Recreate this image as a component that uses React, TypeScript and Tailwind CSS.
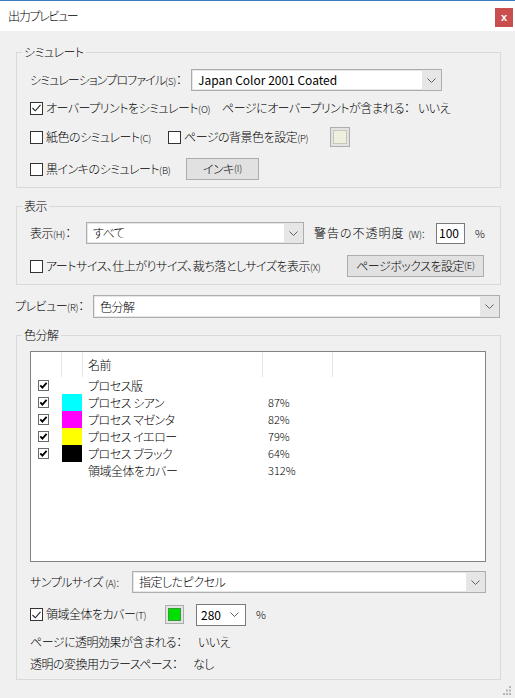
import React from "react";

const Chevron = () => (
  <svg width="9" height="5" viewBox="0 0 9 5">
    <path d="M0.5 0.5 L4.5 4.5 L8.5 0.5" fill="none" stroke="#606060" strokeWidth="1" />
  </svg>
);

// mnemonic key in parentheses, drawn smaller like the Windows dialog
const Key = ({ k }: { k: string }) => (
  <span className="text-[9.5px] tracking-[-0.2px]">({k})</span>
);

const CheckBox = ({ checked }: { checked?: boolean }) => (
  <span className="w-[13px] h-[13px] border border-[#333333] bg-white flex items-center justify-center shrink-0">
    {checked && (
      <svg width="9" height="8" viewBox="0 0 9 8">
        <path d="M0.5 4 L3.3 6.8 L8.5 0.8" fill="none" stroke="#222222" strokeWidth="1.1" />
      </svg>
    )}
  </span>
);

const ListCheck = () => (
  <svg width="11" height="11" viewBox="0 0 11 11">
    <rect x="0.5" y="0.5" width="10" height="10" fill="white" stroke="#6a6a6a" />
    <path d="M2.3 5.3 L4.4 7.6 L8.6 2.8" fill="none" stroke="#000" strokeWidth="1.8" />
  </svg>
);

const Select = ({ value, className = "" }: { value: string; className?: string }) => (
  <div className={`flex border border-[#adadad] bg-[#e6e6e6] ${className}`}>
    <div className="flex-1 bg-white flex items-center pl-[5px] m-[1px] mr-0">{value}</div>
    <div className="w-[19px] flex items-center justify-center">
      <Chevron />
    </div>
  </div>
);

const Button = ({ children, className = "" }: { children: React.ReactNode; className?: string }) => (
  <div
    className={`flex items-center justify-center border border-[#adadad] bg-[#e1e1e1] ${className}`}
  >
    {children}
  </div>
);

const Group = ({
  title,
  className = "",
  children,
}: {
  title: string;
  className?: string;
  children: React.ReactNode;
}) => (
  <div className={`relative border border-[#d9d9d9] ml-[16px] w-[485px] ${className}`}>
    <span className="absolute -top-[9px] left-[5px] px-[2px] bg-[#f0f0f0] leading-[16px]">
      {title}
    </span>
    {children}
  </div>
);

const inks = [
  { name: "プロセス版", color: "", pct: "" },
  { name: "プロセス シアン", color: "bg-[#00ffff]", pct: "87%" },
  { name: "プロセス マゼンタ", color: "bg-[#ff00ff]", pct: "82%" },
  { name: "プロセス イエロー", color: "bg-[#ffff00]", pct: "79%" },
  { name: "プロセス ブラック", color: "bg-[#000000]", pct: "64%" },
];

export default function App() {
  return (
    <div className="w-[515px] h-[698px] bg-[#f0f0f0] text-[12px] text-black font-['Noto_Sans_CJK_JP',sans-serif] font-light [font-feature-settings:'palt'] tracking-[-0.5px] leading-none whitespace-nowrap overflow-hidden">
      {/* title bar */}
      <div className="h-[31px] bg-white border-t border-[#3a7bc0] flex justify-between items-start">
        <div className="pl-[8px] pt-[9px] text-[12px] tracking-[-1.3px]">出力プレビュー</div>
        <div className="mt-[7px] mr-[2px] w-[18px] h-[19px] bg-[#c94f4f] text-white flex items-center justify-center text-[11px] font-['Liberation_Sans',sans-serif] font-bold tracking-normal">
          x
        </div>
      </div>

      {/* シミュレート */}
      <Group title="シミュレート" className="mt-[21px] pt-[16px] pl-[13px] pb-[7px]">
        <div className="flex items-center h-[22px]">
          <div className="w-[161px] tracking-[-0.9px]">
            シミュレーションプロファイル<Key k="S" />：
          </div>
          <Select
            value="Japan Color 2001 Coated"
            className="w-[251px] h-[22px] text-[12px] font-normal tracking-normal"
          />
        </div>
        <div className="flex items-center h-[22px] mt-[6px]">
          <div className="w-[192px] flex items-center gap-[3px]">
            <CheckBox checked />
            <span>
              オーバープリントをシミュレート<Key k="O" />
            </span>
          </div>
          <span className="w-[196px]">ページにオーバープリントが含まれる：</span>
          <span>いいえ</span>
        </div>
        <div className="flex items-center h-[22px] mt-[7px]">
          <div className="w-[138px] flex items-center gap-[3px]">
            <CheckBox />
            <span>
              紙色のシミュレート<Key k="C" />
            </span>
          </div>
          <div className="w-[162px] flex items-center gap-[3px]">
            <CheckBox />
            <span>
              ページの背景色を設定<Key k="P" />
            </span>
          </div>
          <div className="w-[20px] h-[20px] border border-[#adadad] bg-[#e3e3e3] p-[2px]">
            <div className="w-full h-full bg-[#efefdf] border border-[#c8c8b8]" />
          </div>
        </div>
        <div className="flex items-center h-[22px] mt-[10px]">
          <div className="w-[156px] flex items-center gap-[3px]">
            <CheckBox />
            <span>
              黒インキのシミュレート<Key k="B" />
            </span>
          </div>
          <Button className="w-[73px] h-[22px]">
            インキ<Key k="I" />
          </Button>
        </div>
      </Group>

      {/* 表示 */}
      <Group title="表示" className="mt-[18px] pt-[15px] pl-[13px] pb-[7px]">
        <div className="flex items-center h-[22px]">
          <div className="w-[56px]">
            表示<Key k="H" />：
          </div>
          <Select value="すべて" className="w-[218px] h-[22px]" />
          <div className="ml-[10px] w-[122px] tracking-[1px]">
            警告の不透明度 <Key k="W" />:
          </div>
          <div className="w-[29px] h-[21px] border border-[#7a7a7a] bg-white flex items-center pl-[2px] font-normal tracking-normal">
            100
          </div>
          <span className="ml-[10px] text-[11px] tracking-normal">%</span>
        </div>
        <div className="flex items-center h-[22px] mt-[11px]">
          <div className="w-[317px] flex items-center gap-[3px]">
            <CheckBox />
            <span>
              アートサイス、仕上がりサイズ、裁ち落としサイズを表示<Key k="X" />
            </span>
          </div>
          <Button className="w-[137px] h-[22px]">
            ページボックスを設定<Key k="E" />
          </Button>
        </div>
      </Group>

      {/* プレビュー */}
      <div className="flex items-center h-[23px] mt-[10px] ml-[15px]">
        <div className="w-[78px]">
          プレビュー<Key k="R" />：
        </div>
        <Select value="色分解" className="w-[407px] h-[23px]" />
      </div>

      {/* 色分解 */}
      <Group title="色分解" className="mt-[17px] pt-[15px] pl-[13px] pb-[4px]">
        <div className="w-[456px] h-[211px] border border-[#828282] bg-white">
          <div className="flex h-[25px]">
            <div className="w-[31px] border-r border-[#e5e5e5]" />
            <div className="w-[21px] border-r border-[#e5e5e5]" />
            <div className="w-[180px] border-r border-[#e5e5e5] pl-[5px] flex items-center">名前</div>
            <div className="w-[70px] border-r border-[#e5e5e5]" />
          </div>
          {inks.map((ink) => (
            <div key={ink.name} className="flex h-[17px] items-center">
              <div className="w-[31px] pl-[7px] flex items-center">
                <ListCheck />
              </div>
              <div className="w-[21px] h-full">
                {ink.color && <div className={`w-[20px] h-full ${ink.color}`} />}
              </div>
              <div className="w-[180px] pl-[5px]">{ink.name}</div>
              <div className="pl-[5px] text-[11px] tracking-normal">{ink.pct}</div>
            </div>
          ))}
          <div className="flex h-[17px] items-center">
            <div className="w-[52px]" />
            <div className="w-[180px] pl-[5px]">領域全体をカバー</div>
            <div className="pl-[5px] text-[11px] tracking-normal">312%</div>
          </div>
        </div>

        <div className="flex items-center h-[22px] mt-[9px]">
          <div className="w-[102px]">
            サンプルサイズ <Key k="A" />:
          </div>
          <Select value="指定したピクセル" className="w-[354px] h-[22px]" />
        </div>
        <div className="flex items-center h-[23px] mt-[10px]">
          <div className="w-[135px] flex items-center gap-[3px]">
            <CheckBox checked />
            <span>
              領域全体をカバー<Key k="T" />
            </span>
          </div>
          <div className="w-[19px] h-[19px] border border-[#adadad] bg-[#e3e3e3] p-[2px]">
            <div className="w-full h-full bg-[#00e000] border border-[#3a9a3a]" />
          </div>
          <div className="ml-[12px] w-[50px] h-[22px] border border-[#7a7a7a] bg-white flex items-center justify-between pl-[4px] pr-[6px] font-normal tracking-normal">
            <span>280</span>
            <Chevron />
          </div>
          <span className="ml-[10px] text-[11px] tracking-normal">%</span>
        </div>
        <div className="flex items-center h-[22px] mt-[5px]">
          <span className="w-[168px]">ページに透明効果が含まれる：</span>
          <span>いいえ</span>
        </div>
        <div className="flex items-center h-[22px]">
          <span className="w-[163px]">透明の変換用カラースペース：</span>
          <span>なし</span>
        </div>
      </Group>

      {/* resize grip */}
      <div className="flex justify-end mt-[6px] pr-[3px]">
        <svg width="10" height="10" viewBox="0 0 10 10">
          <rect x="7" y="0" width="2" height="2" fill="#b5b5b5" />
          <rect x="4" y="3.5" width="2" height="2" fill="#b5b5b5" />
          <rect x="7" y="3.5" width="2" height="2" fill="#b5b5b5" />
          <rect x="1" y="7" width="2" height="2" fill="#b5b5b5" />
          <rect x="4" y="7" width="2" height="2" fill="#b5b5b5" />
          <rect x="7" y="7" width="2" height="2" fill="#b5b5b5" />
        </svg>
      </div>
    </div>
  );
}
